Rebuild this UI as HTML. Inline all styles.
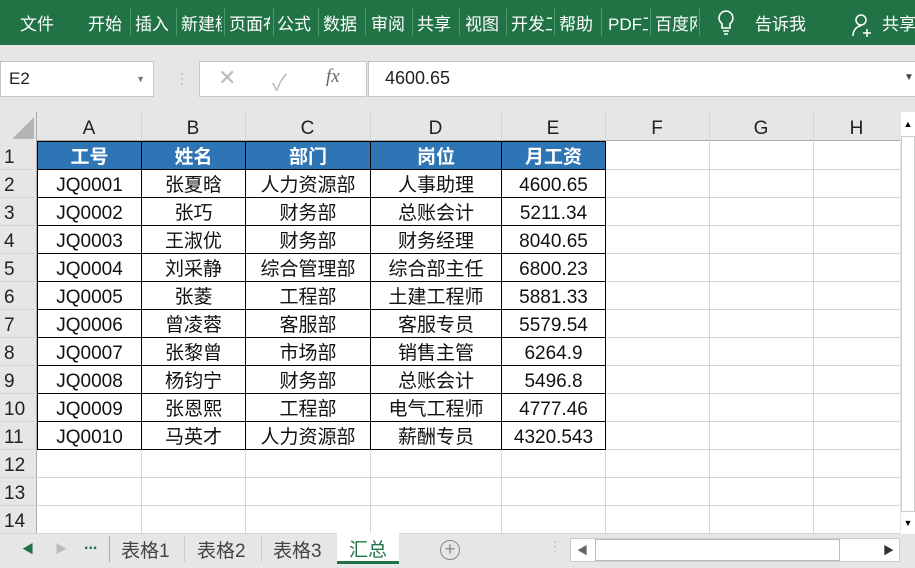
<!DOCTYPE html>
<html><head><meta charset="utf-8"><style>
*{margin:0;padding:0;box-sizing:border-box}
body{width:915px;height:568px;overflow:hidden;background:#e6e6e6;font-family:"Liberation Sans","Noto Sans CJK SC",sans-serif;position:relative}
.rib{position:absolute;left:0;top:0;width:915px;height:45px;background:#217346;color:#fff;font-size:17px}
.rib span{position:absolute;top:10px;white-space:nowrap;overflow:hidden}
.sep{position:absolute;top:8px;width:1px;height:28px;background:#4a9a6a}
.box{position:absolute;background:#fff;border:1px solid #c6c6c6}
.grid{position:absolute;left:0;top:112px;width:900px;height:422px;background:#fff;overflow:hidden}
.c{position:absolute;text-align:center;font-size:19px;line-height:28px;white-space:nowrap;padding-top:2px}
.hl{position:absolute;background:#d4d4d4}
.tabs{position:absolute;left:0;top:534px;width:915px;height:34px;background:#e6e6e6;font-size:19px;color:#444}
</style></head><body>
<div class="rib">
<span style="left:20px">文件</span>
<span style="left:88px">开始</span><div class="sep" style="left:130px"></div>
<span style="left:135px">插入</span><div class="sep" style="left:176px"></div>
<span style="left:181px;width:41px">新建模</span><div class="sep" style="left:224px"></div>
<span style="left:229px;width:41px">页面布</span><div class="sep" style="left:273px"></div>
<span style="left:277px">公式</span><div class="sep" style="left:318px"></div>
<span style="left:323px">数据</span><div class="sep" style="left:365px"></div>
<span style="left:371px">审阅</span><div class="sep" style="left:412px"></div>
<span style="left:417px">共享</span><div class="sep" style="left:459px"></div>
<span style="left:465px">视图</span><div class="sep" style="left:506px"></div>
<span style="left:511px;width:41px">开发工</span><div class="sep" style="left:554px"></div>
<span style="left:559px">帮助</span><div class="sep" style="left:601px"></div>
<span style="left:608px;width:40px">PDF工</span><div class="sep" style="left:650px"></div>
<span style="left:655px;width:42px">百度网</span><div class="sep" style="left:699px"></div>
<svg style="position:absolute;left:716px;top:9px" width="20" height="28" viewBox="0 0 20 28"><path d="M10 2a7 7 0 0 0-4 12.7V19h8v-4.3A7 7 0 0 0 10 2z M7 22h6 M8 25h4" fill="none" stroke="#fff" stroke-width="1.6"/></svg>
<span style="left:755px">告诉我</span>
<svg style="position:absolute;left:851px;top:12px" width="24" height="26" viewBox="0 0 24 26"><circle cx="10" cy="8" r="5" fill="none" stroke="#fff" stroke-width="1.5"/><path d="M2 24c0-6 4-10 8-10M16 17v8M12 21h8" fill="none" stroke="#fff" stroke-width="1.5"/></svg>
<span style="left:882px">共享</span>
</div>
<div class="box" style="left:0;top:61px;width:154px;height:36px;font-size:17px;padding:7px 8px;color:#222">E2<span style="position:absolute;right:8px;top:12px;font-size:9px;color:#777">▼</span></div>
<div style="position:absolute;left:175px;top:70px;color:#aaa;font-size:14px">⋮</div>
<div class="box" style="left:199px;top:61px;width:168px;height:36px;color:#bbb;font-size:22px">
<span style="position:absolute;left:18px;top:3px">✕</span><span style="position:absolute;left:72px;top:3px">✓</span><span style="position:absolute;left:126px;top:4px;font-family:'Liberation Serif',serif;font-style:italic;color:#666;font-size:19px">fx</span></div>
<div class="box" style="left:368px;top:61px;width:560px;height:36px;font-size:18px;padding:6px 16px;color:#222">4600.65<span style="position:absolute;left:535px;top:10px;font-size:10px;color:#444">▼</span></div>
<div class="grid">
<div style="position:absolute;left:0;top:0;width:900px;height:29px;background:#e6e6e6;border-bottom:1px solid #ababab"></div>
<div style="position:absolute;left:0;top:0;width:37px;height:422px;background:#e6e6e6;border-right:1px solid #ababab"></div>
<svg style="position:absolute;left:12px;top:5px" width="22" height="22"><path d="M22 0V22H0Z" fill="#b4b4b4"/></svg>
<div id="g"></div>
</div>
<div style="position:absolute;left:900px;top:112px;width:15px;height:422px;background:#e6e6e6"><div style="position:absolute;left:1px;top:0;width:14px;height:24px;background:#fff;font-size:9px;text-align:center;line-height:24px">▲</div><div style="position:absolute;left:1px;top:24px;width:14px;height:376px;background:#fff;border:1px solid #ccc"></div><div style="position:absolute;left:1px;top:400px;width:14px;height:22px;background:#fff;font-size:9px;text-align:center;line-height:22px">▼</div></div>
<div class="tabs">
<span style="position:absolute;left:22px;top:6px;color:#217346;font-size:12px">◀</span>
<span style="position:absolute;left:55px;top:6px;color:#bbb;font-size:12px">▶</span>
<span style="position:absolute;left:84px;top:2px;color:#217346;font-weight:bold;font-size:16px">...</span>
<div style="position:absolute;left:109px;top:2px;width:1px;height:26px;background:#aaa"></div>
<span style="position:absolute;left:121px;top:2px">表格1</span>
<div style="position:absolute;left:184px;top:2px;width:1px;height:26px;background:#ccc"></div>
<span style="position:absolute;left:197px;top:2px">表格2</span>
<div style="position:absolute;left:261px;top:2px;width:1px;height:26px;background:#ccc"></div>
<span style="position:absolute;left:273px;top:2px">表格3</span>
<div style="position:absolute;left:337px;top:-1px;width:62px;height:31px;background:#fff;border-bottom:3px solid #217346;color:#217346;text-align:center;padding-top:2px">汇总</div>
<div style="position:absolute;left:440px;top:6px;width:20px;height:20px;border:1px solid #888;border-radius:50%;text-align:center;line-height:17px;color:#888;font-size:18px">+</div>
<span style="position:absolute;left:548px;top:4px;color:#bbb;font-size:14px">⋮</span>
<div style="position:absolute;left:570px;top:4px;width:330px;height:24px;background:#fff;border:1px solid #ccc"><div style="position:absolute;left:24px;top:0;width:245px;height:22px;border:1px solid #bbb"></div><span style="position:absolute;left:6px;top:3px;font-size:11px;color:#666">◀</span><span style="position:absolute;left:312px;top:3px;font-size:11px;color:#333">▶</span></div>
</div>
<script>
var g=document.getElementById('g'),h='';
var cols=[37,141,245,370,501,605,709,813,900],L='ABCDEFGH';
for(var i=0;i<8;i++){h+='<div class="c" style="left:'+cols[i]+'px;top:1px;width:'+(cols[i+1]-cols[i])+'px;color:#222">'+L[i]+'</div>';
h+='<div class="hl" style="left:'+cols[i+1]+'px;top:0;width:1px;height:422px"></div>';}
for(var r=1;r<=15;r++){var t=29+(r-1)*28;h+='<div class="hl" style="left:0;top:'+(t+28)+'px;width:900px;height:1px"></div>';
h+='<div style="position:absolute;left:4px;top:'+(t+3)+'px;font-size:19px;line-height:28px;color:#222">'+r+'</div>';}
var d=[["工号","姓名","部门","岗位","月工资"],["JQ0001","张夏晗","人力资源部","人事助理","4600.65"],["JQ0002","张巧","财务部","总账会计","5211.34"],["JQ0003","王淑优","财务部","财务经理","8040.65"],["JQ0004","刘采静","综合管理部","综合部主任","6800.23"],["JQ0005","张菱","工程部","土建工程师","5881.33"],["JQ0006","曾凌蓉","客服部","客服专员","5579.54"],["JQ0007","张黎曾","市场部","销售主管","6264.9"],["JQ0008","杨钧宁","财务部","总账会计","5496.8"],["JQ0009","张恩熙","工程部","电气工程师","4777.46"],["JQ0010","马英才","人力资源部","薪酬专员","4320.543"]];
h+='<div style="position:absolute;left:37px;top:29px;width:568px;height:28px;background:#2e75b6"></div>';
for(var r=0;r<11;r++)for(var c=0;c<5;c++){var t=29+r*28;
h+='<div class="c" style="left:'+cols[c]+'px;top:'+t+'px;width:'+(cols[c+1]-cols[c]+1)+'px;height:29px;border:1px solid #000;'+(r==0?'color:#fff;font-weight:bold;':'color:#111;')+'">'+d[r][c]+'</div>';}
g.innerHTML=h;
</script>
</body></html>
